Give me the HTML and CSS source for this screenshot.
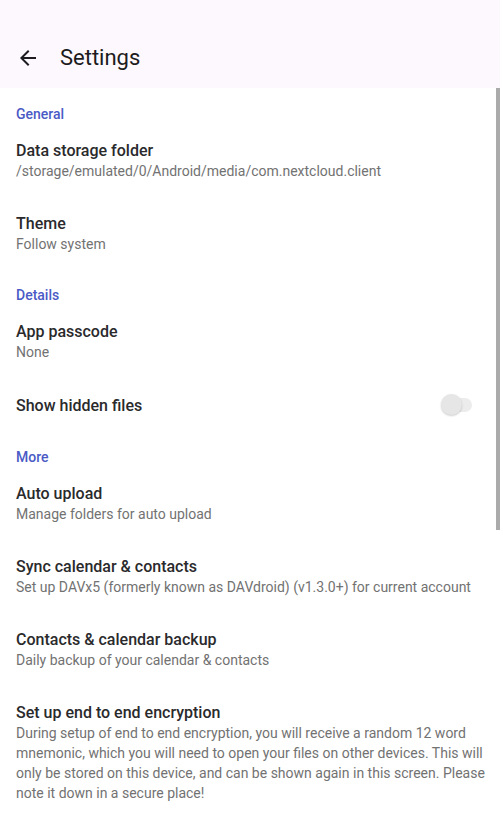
FILE: index.html
```html
<!DOCTYPE html>
<html>
<head>
  <meta charset="UTF-8">
  <title>Settings</title>
  <link rel="stylesheet" href="styles.css">
</head>
<body>
  <div id="screen">
    <div id="appBar">
      <button class="back-button" aria-label="Back">
        <svg width="24" height="24" viewBox="0 0 24 24"><path d="M20 11H7.83l5.59-5.59L12 4l-8 8 8 8 1.41-1.41L7.83 13H20v-2z" fill="#1d1b20"/></svg>
      </button>
      <div class="title">Settings</div>
    </div>
    <div id="prefs">
      <div class="category first">General</div>
      <div class="pref">
        <div class="pref-title">Data storage folder</div>
        <div class="pref-summary">/storage/emulated/0/Android/media/com.nextcloud.client</div>
      </div>
      <div class="pref">
        <div class="pref-title">Theme</div>
        <div class="pref-summary">Follow system</div>
      </div>

      <div class="category">Details</div>
      <div class="pref">
        <div class="pref-title">App passcode</div>
        <div class="pref-summary">None</div>
      </div>
      <div class="pref pref-switch">
        <div class="pref-title">Show hidden files</div>
        <div class="switch">
          <div class="switch-track"></div>
          <div class="switch-thumb"></div>
        </div>
      </div>

      <div class="category">More</div>
      <div class="pref">
        <div class="pref-title">Auto upload</div>
        <div class="pref-summary">Manage folders for auto upload</div>
      </div>
      <div class="pref">
        <div class="pref-title">Sync calendar &amp; contacts</div>
        <div class="pref-summary">Set up DAVx5 (formerly known as DAVdroid) (v1.3.0+) for current account</div>
      </div>
      <div class="pref">
        <div class="pref-title">Contacts &amp; calendar backup</div>
        <div class="pref-summary">Daily backup of your calendar &amp; contacts</div>
      </div>
      <div class="pref">
        <div class="pref-title">Set up end to end encryption</div>
        <div class="pref-summary">During setup of end to end encryption, you will receive a random 12 word mnemonic, which you will need to open your files on other devices. This will only be stored on this device, and can be shown again in this screen. Please note it down in a secure place!</div>
      </div>
    </div>
    <div class="scrollbar"></div>
  </div>
</body>
</html>
```

FILE: styles.css
```css
body {
  margin: 0;
  font-family: Roboto, 'Noto Sans', sans-serif;
  background-color: #ffffff;
  color: #1d1b20;
}
#screen {
  position: relative;
  width: 500px;
  height: 833px;
  overflow: hidden;
  display: flex;
  flex-direction: column;
}
#appBar {
  display: flex;
  align-items: center;
  height: 88px;
  padding: 28px 0 0 16px;
  box-sizing: border-box;
  background-color: #fcf8fd;
  flex-shrink: 0;
}
.back-button {
  width: 24px;
  height: 24px;
  padding: 0;
  border: none;
  background: none;
  display: flex;
}
.title {
  margin-left: 20px;
  font-size: 22px;
  line-height: 28px;
  color: #1d1b20;
}
#prefs {
  display: flex;
  flex-direction: column;
}
.category {
  padding: 15px 16px 0;
  font-size: 14px;
  line-height: 20px;
  font-weight: 500;
  color: #4a5ac6;
}
.category.first {
  padding-top: 16px;
}
.pref {
  padding: 16px 8px 16px 16px;
}
.pref-title {
  font-size: 16px;
  line-height: 21px;
  font-weight: 500;
  color: #2a2a2c;
}
.pref-summary {
  font-size: 14px;
  line-height: 20px;
  color: #727272;
}
.pref-switch {
  display: flex;
  align-items: center;
  justify-content: space-between;
  min-height: 22px;
  padding-right: 28px;
}
.switch {
  position: relative;
  width: 31px;
  height: 22px;
}
.switch-track {
  position: absolute;
  left: 4px;
  right: 0;
  top: 4px;
  height: 14px;
  border-radius: 7px;
  background-color: #ececec;
}
.switch-thumb {
  position: absolute;
  left: 0;
  top: 0;
  width: 21px;
  height: 21px;
  border-radius: 50%;
  background-color: #e6e6e6;
  box-shadow: 0 1px 2px rgba(0,0,0,0.2);
}
.scrollbar {
  position: absolute;
  top: 88px;
  right: 0;
  width: 4px;
  height: 442px;
  background-color: #ababab;
}
```
